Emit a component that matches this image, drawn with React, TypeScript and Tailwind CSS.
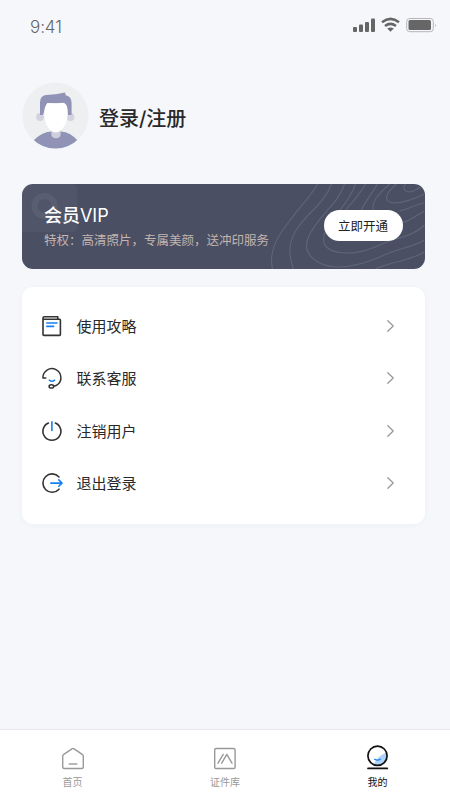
import React from 'react';

function StatusBar() {
  return (
    <header className="flex h-[54px] items-center justify-between pl-[30px] pr-[13px] text-[#666]">
      <span className="pt-[1px] font-['Inter','Roboto',sans-serif] text-[17px] font-light tracking-[-0.1px]">9:41</span>
      <svg width="84" height="16" viewBox="353 17 84 16" className="mb-[4px]" fill="none">
        <g fill="#666">
          <rect x="353" y="27" width="4" height="5" rx="1" />
          <rect x="359" y="24.5" width="4" height="7.5" rx="1" />
          <rect x="365" y="22" width="4" height="10" rx="1" />
          <rect x="371" y="18.5" width="4" height="13.5" rx="1" />
          <path d="M387.2 28.6Q390.5 26.4 393.8 28.6L390.5 31.8Z" />
          <rect x="408.5" y="20" width="22.5" height="10" rx="1.6" />
          <path d="M435 23.5q1.8 1.7 0 3.4z" opacity=".5" />
        </g>
        <path d="M382 22.2Q390.5 15.6 399 22.2M385 25.9Q390.5 21.8 396 25.9" stroke="#666" strokeWidth="2.5" />
        <rect x="406.7" y="18.5" width="26.6" height="13.2" rx="3" stroke="#b5b5b8" />
      </svg>
    </header>
  );
}

function Avatar() {
  return (
    <svg width="67" height="67" viewBox="22 82 67 67" className="shrink-0">
      <defs>
        <clipPath id="face"><circle cx="55.5" cy="115.5" r="33" /></clipPath>
      </defs>
      <circle cx="55.5" cy="115.5" r="33" fill="#eeeff0" />
      <g clipPath="url(#face)">
        <circle cx="40" cy="117" r="3.9" fill="#d2d3df" />
        <circle cx="70.5" cy="117" r="3.9" fill="#d2d3df" />
        <path d="M33 141Q42 131.7 51 131.5H61Q70 131.7 78 141V150H33Z" fill="#9093b6" />
        <path d="M51.3 128h9.4v5.5q0 4.7-4.7 4.7t-4.7-4.7z" fill="#cfd0dc" />
        <path d="M40 115V102.5Q40 95.5 46 95Q56 94.8 65 92.6L65.8 95.2Q71.6 96.5 71.6 103V115H68L64 103H47L43 115Z" fill="#9093b6" />
        <path d="M46.5 104.5Q48 102.5 51 103.5Q56 104.6 61 103Q65 102.2 66.8 106Q68.5 111 67.1 119C65.5 127 60 132.5 55.8 132.5C51 132.5 46 126.5 44.8 119Q43.2 108.5 46.5 104.5Z" fill="white" />
      </g>
    </svg>
  );
}

function CardArtwork() {
  return (
    <svg className="absolute inset-0" width="403" height="85" viewBox="22.5 184 403 85" fill="none">
      <path d="M22 184H72Q78 184 78 190V226Q78 232 72 232H22Z" fill="white" opacity=".035" />
      <circle cx="45" cy="206" r="10" stroke="white" strokeWidth="6" opacity=".055" />
      <g stroke="#60657a" strokeWidth="1.1">
        <path d="M318 184C311 197 300 207 290 221C278 236 269 251 273 269" />
        <path d="M332 184C325 203 308 213 298 228C288 243 289 255 294 269" />
        <path d="M345 184C338 205 318 216 309 237C302 253 316 266 337 267C362 267 378 257 395 251C408 247 417 245 425 240" />
        <path d="M356 184C349 205 333 215 326 231C320 246 329 252 345 253C367 254 380 243 400 238C411 235 418 232 425 225" />
        <path d="M366 184C360 196 350 204 344 213M402 223C412 220 419 214 425 211" />
        <path d="M378 184C371 196 365 202 361 212" />
        <path d="M390 184C379 194 371 202 374 212M400 211C409 209 417 204 425 203" />
        <path d="M397 184C386 193 383 202 394 203C405 203 414 199 425 194" />
        <path d="M406 184C401 191 409 194 416 190C421 188 422 186 423 184" />
        <path d="M376 269C390 262 407 262 425 252" />
      </g>
    </svg>
  );
}

function VipCard() {
  return (
    <section className="relative flex h-[85px] items-center justify-between overflow-hidden rounded-[11px] bg-[#4a4f64] pl-[21.5px] pr-[22px]">
      <CardArtwork />
      <div className="relative pb-[2px]">
        <h2 className="text-[18px] font-medium leading-[26px] text-white">
          会员<span className="font-['Inter',sans-serif] font-normal">VIP</span>
        </h2>
        <p className="whitespace-nowrap text-[12.5px] leading-[22px] text-[#c4b5ae]">特权：高清照片，专属美颜，送冲印服务</p>
      </div>
      <button className="relative mb-[2px] h-[31px] w-[79px] rounded-full bg-white pr-[1px] pt-[2px] text-[12.5px] text-[#222]">立即开通</button>
    </section>
  );
}

function GuideIcon() {
  return (
    <svg width="24" height="24" viewBox="0 0 24 24" fill="none" stroke="#333" strokeWidth="1.6" strokeLinejoin="round">
      <path d="M3 5.2V20.6Q3 21.4 3.8 21.4H19.6Q20.4 21.4 20.4 20.6V6Q20.4 5.2 19.6 5.2H3V4Q3 2.7 4.3 2.7H17.8V5.2" />
      <path d="M6.8 9H17M6.8 12.4H13.6" stroke="#1680ef" strokeLinecap="round" />
    </svg>
  );
}

function ServiceIcon() {
  return (
    <svg width="24" height="24" viewBox="0 0 24 24" fill="none" stroke="#333" strokeWidth="1.5" strokeLinecap="round" strokeLinejoin="round">
      <path d="M5.8 11.9H2.9A9 9 0 1 1 17 19Q15.6 19.9 13.7 20.2" />
      <ellipse cx="11.4" cy="20.4" rx="2.3" ry="1.6" />
      <path d="M9.3 14.1Q12 16.2 14.6 14.1" stroke="#1680ef" />
    </svg>
  );
}

function PowerIcon() {
  return (
    <svg width="24" height="24" viewBox="0 0 24 24" fill="none" stroke="#333" strokeWidth="1.6" strokeLinecap="round">
      <path d="M8.4 4A9 9 0 1 0 15.4 4" />
      <path d="M11.9 2.2V12" stroke="#1680ef" strokeLinecap="butt" />
    </svg>
  );
}

function LogoutIcon() {
  return (
    <svg width="24" height="24" viewBox="0 0 24 24" fill="none" stroke="#333" strokeWidth="1.6" strokeLinecap="round" strokeLinejoin="round">
      <path d="M19 6A9.2 9.2 0 1 0 19 18.2" />
      <path d="M10.8 12.1H22M18.8 8.9L22 12.1L18.8 15.3" stroke="#1680ef" />
    </svg>
  );
}

const menu = [
  { label: '使用攻略', Icon: GuideIcon },
  { label: '联系客服', Icon: ServiceIcon },
  { label: '注销用户', Icon: PowerIcon },
  { label: '退出登录', Icon: LogoutIcon },
];

function Menu() {
  return (
    <section className="mt-[17.5px] h-[237.5px] rounded-[11px] bg-white pl-[18px] pr-[30.5px] pt-[13.4px] shadow-[0_1px_6px_rgba(60,65,90,0.04)]">
      {menu.map(({ label, Icon }) => (
        <div key={label} className="flex h-[52.4px] items-center">
          <Icon />
          <span className="ml-[12px] flex-1 pt-[0.5px] text-[15px] text-[#292929]">{label}</span>
          <svg width="9" height="14" viewBox="0 0 9 14" fill="none" stroke="#999" strokeWidth="1.3" strokeLinecap="round" strokeLinejoin="round">
            <path d="M1.8 1.8L7.2 7L1.8 12.2" />
          </svg>
        </div>
      ))}
    </section>
  );
}

function HomeIcon() {
  return (
    <svg width="26" height="26" viewBox="0 0 26 26" fill="none" stroke="#999" strokeWidth="1.4" strokeLinejoin="round">
      <path d="M2.7 10Q2.7 9.2 3.4 8.7L12.3 2.7Q13 2.2 13.7 2.7L22.6 8.7Q23.3 9.2 23.3 10V21Q23.3 22.5 21.8 22.5H4.2Q2.7 22.5 2.7 21Z" />
      <path d="M8.7 18H17.3" />
    </svg>
  );
}

function LibraryIcon() {
  return (
    <svg width="26" height="26" viewBox="0 0 26 26" fill="none" stroke="#999" strokeWidth="1.4" strokeLinecap="round" strokeLinejoin="round">
      <rect x="2.7" y="2.5" width="20.4" height="20" rx="1.3" />
      <path d="M6 17.2L11.2 8.4M9.7 17.2L14.8 8.4L20 17.2" />
    </svg>
  );
}

function ProfileIcon() {
  return (
    <svg width="26" height="26" viewBox="0 0 26 26" fill="none">
      <path d="M21.8 6.5A9.8 9.8 0 0 1 8.5 18.5Q13.5 9 21.8 6.5Z" fill="#add2fb" />
      <circle cx="12.5" cy="9.8" r="9.6" stroke="#111" strokeWidth="1.7" className="overflow-visible" />
      <path d="M9.7 13.2Q12.5 15 15.3 13.2" stroke="#1680ef" strokeWidth="1.3" strokeLinecap="round" />
      <path d="M3 22.4H22.3" stroke="#111" strokeWidth="1.7" strokeLinecap="round" />
    </svg>
  );
}

const tabs = [
  { label: '首页', Icon: HomeIcon, active: false },
  { label: '证件库', Icon: LibraryIcon, active: false },
  { label: '我的', Icon: ProfileIcon, active: true },
];

function TabBar() {
  return (
    <nav className="mt-auto grid h-[71px] grid-cols-[145px_160px_145px] border-t border-[#e8e9ed] bg-white pt-[16px] [&_svg]:overflow-visible">
      {tabs.map(({ label, Icon, active }) => (
        <div key={label} className="flex flex-col items-center">
          <Icon />
          <span className={active ? 'mt-[2.5px] text-[10px] leading-[14px] text-[#111]' : 'mt-[2.5px] text-[10px] leading-[14px] text-[#999]'}>{label}</span>
        </div>
      ))}
    </nav>
  );
}

export default function App() {
  return (
    <div className="flex h-[800px] w-[450px] flex-col overflow-hidden bg-[#f5f7fb] font-['Noto_Sans_CJK_SC',sans-serif]">
      <StatusBar />
      <main className="pl-[22.4px] pr-[25px]">
        <div className="mt-[28px] mb-[35px] flex items-center">
          <Avatar />
          <h1 className="ml-[9.5px] pt-[6px] text-[20px] font-medium leading-[30px] text-[#292929]">登录<span className="font-['Inter',sans-serif]">/</span>注册</h1>
        </div>
        <VipCard />
        <Menu />
      </main>
      <TabBar />
    </div>
  );
}
